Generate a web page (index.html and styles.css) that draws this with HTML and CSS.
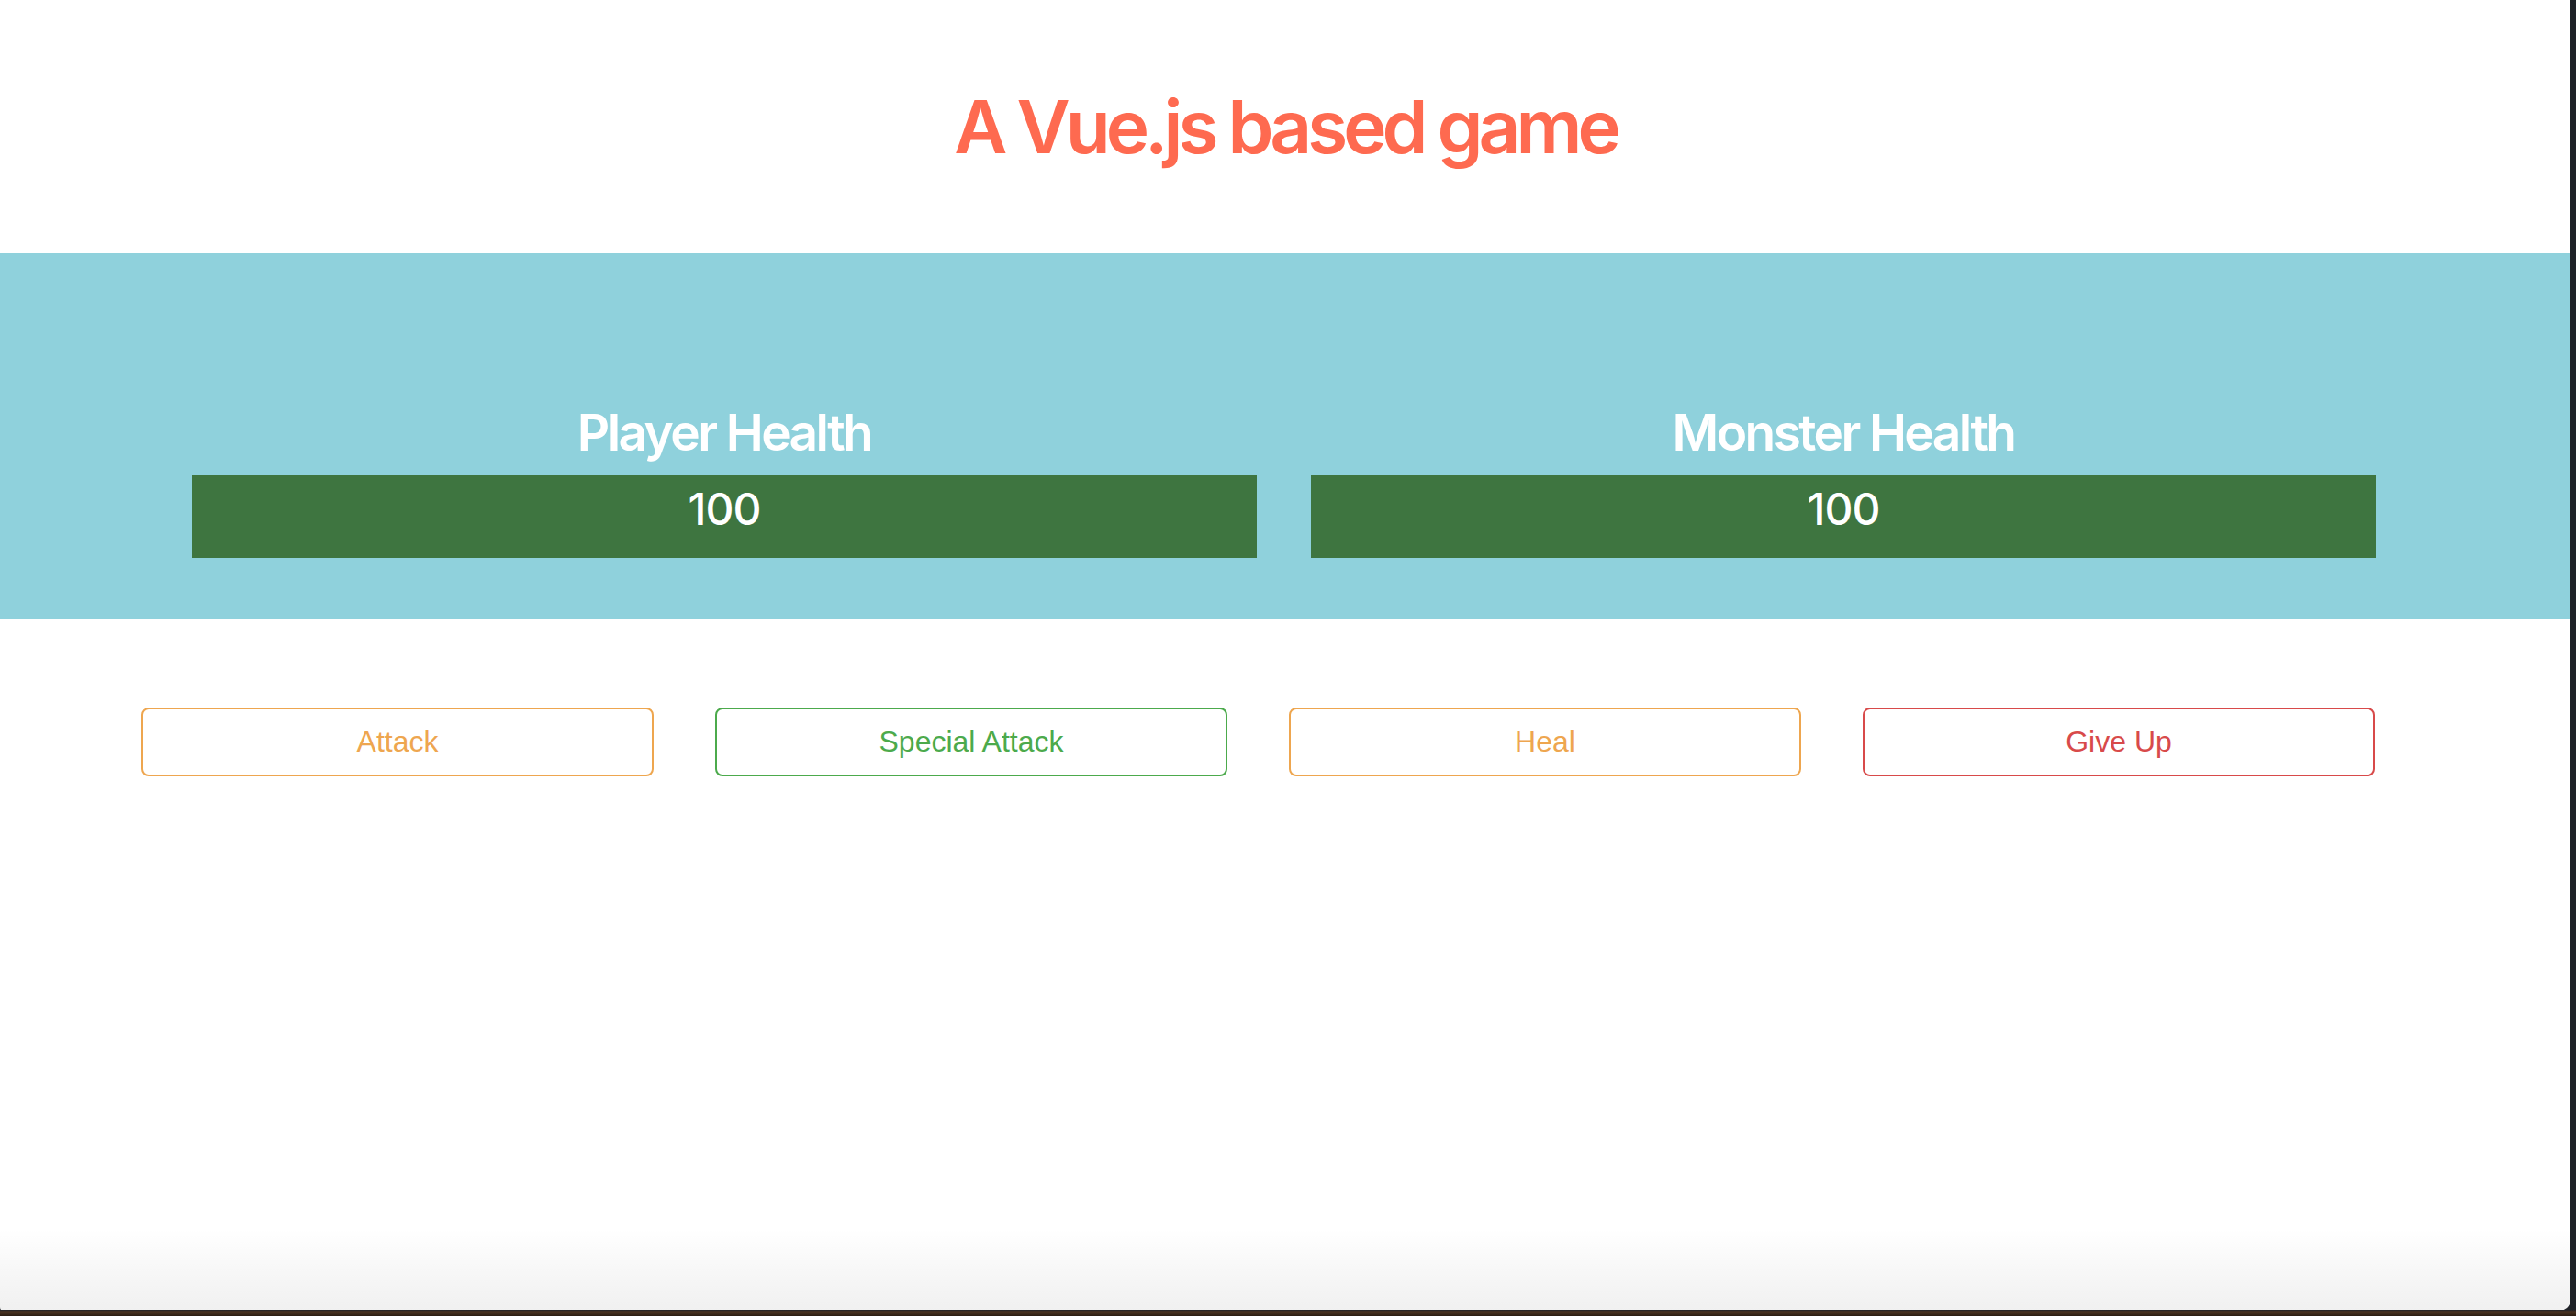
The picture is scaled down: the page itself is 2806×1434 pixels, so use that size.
FILE: index.html
```html
<!DOCTYPE html>
<html lang="en">
<head>
<meta charset="utf-8">
<title>A Vue.js based game</title>
<link rel="stylesheet" href="styles.css">
</head>
<body>
<div class="window">
  <header class="header">
    <h1 class="title">A Vue.js based game</h1>
  </header>
  <section class="health">
    <div class="health-row">
      <div class="health-col">
        <h2 class="health-label">Player Health</h2>
        <div class="bar"><div class="bar-fill" style="width: 100%">100</div></div>
      </div>
      <div class="health-col">
        <h2 class="health-label">Monster Health</h2>
        <div class="bar"><div class="bar-fill" style="width: 100%">100</div></div>
      </div>
    </div>
  </section>
  <section class="controls">
    <button class="btn btn-attack">Attack</button>
    <button class="btn btn-special">Special Attack</button>
    <button class="btn btn-heal">Heal</button>
    <button class="btn btn-giveup">Give Up</button>
  </section>
  <div class="window-shade"></div>
</div>
</body>
</html>
```
FILE: styles.css
```css
html, body {
  margin: 0;
  padding: 0;
}
body {
  width: 2806px;
  height: 1434px;
  overflow: hidden;
  background: linear-gradient(to bottom, #1f2228 0, #1f2228 1428px, #4a3220 1430px, #2a1c12 1434px);
  font-family: Inter, "Noto Sans", sans-serif;
}
.window {
  position: relative;
  width: 2800px;
  height: 1428px;
  background: #ffffff;
  border-bottom-right-radius: 12px;
  border-bottom-left-radius: 4px;
  overflow: hidden;
}
.header {
  height: 276px;
  display: flex;
  align-items: center;
  justify-content: center;
}
.title {
  margin: 0;
  font-size: 80px;
  font-weight: 600;
  letter-spacing: -5px;
  color: #fe6a50;
  line-height: 1.21;
}
.health {
  background: #8fd1dc;
  height: 399px;
  box-sizing: border-box;
  padding: 162px 0 0 209px;
}
.health-row {
  display: flex;
  gap: 59px;
  width: 2379px;
}
.health-col {
  flex: 1;
  display: flex;
  flex-direction: column;
  align-items: stretch;
}
.health-label {
  margin: 0 0 13px;
  text-align: center;
  color: #ffffff;
  font-size: 55px;
  font-weight: 600;
  letter-spacing: -2.6px;
  line-height: 67px;
}
.bar {
  height: 90px;
  background: #8fd1dc;
}
.bar-fill {
  height: 90px;
  background: #3e7540;
  color: #ffffff;
  text-align: center;
  font-size: 48px;
  font-weight: 500;
  letter-spacing: -1px;
  line-height: 74px;
}
.controls {
  display: flex;
  gap: 67px;
  padding: 96px 0 0 154px;
}
.btn {
  width: 558px;
  height: 75px;
  box-sizing: border-box;
  background: #ffffff;
  border: 2px solid;
  border-radius: 8px;
  font-family: "Liberation Sans", Arial, sans-serif;
  font-size: 32px;
  padding: 0;
}
.btn-attack, .btn-heal {
  color: #eea64f;
  border-color: #eea64f;
}
.btn-special {
  color: #4caa4c;
  border-color: #4caa4c;
}
.btn-giveup {
  color: #d84a4a;
  border-color: #d84a4a;
}
.window-shade {
  position: absolute;
  left: 0;
  right: 0;
  bottom: 0;
  height: 90px;
  background: linear-gradient(to bottom, rgba(0,0,0,0), rgba(0,0,0,0.06));
  pointer-events: none;
}
```
